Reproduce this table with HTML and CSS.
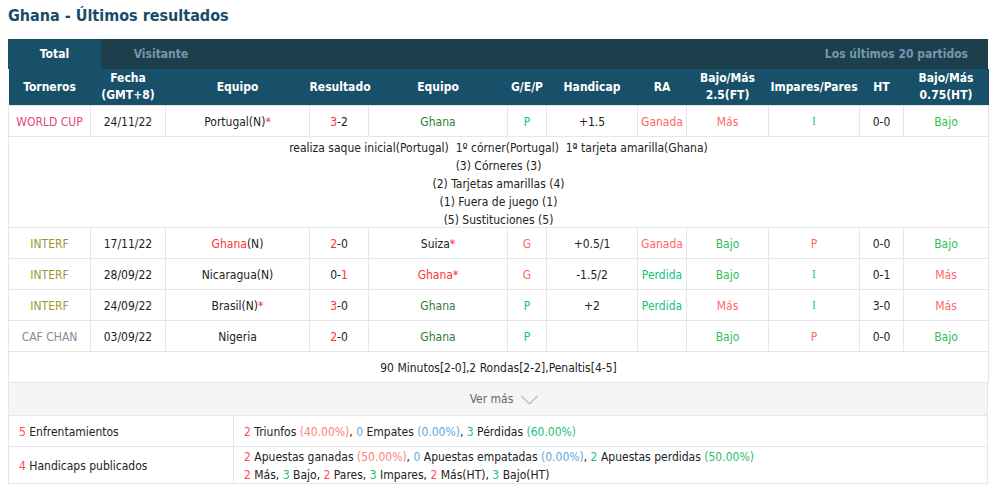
FILE: index.html
```html
<!DOCTYPE html>
<html lang="es">
<head>
<meta charset="utf-8">
<title>Ghana - Últimos resultados</title>
<link rel="stylesheet" href="styles.css">
</head>
<body>
<h2 class="title">Ghana - Últimos resultados</h2>
<div class="panel">
  <div class="tabs">
    <div class="tab active">Total</div>
    <div class="tab">Visitante</div>
    <div class="tabs-info">Los últimos 20 partidos</div>
  </div>
  <table class="results">
    <colgroup>
      <col class="w82"><col class="w75"><col class="w144"><col class="w59"><col class="w139"><col class="w39">
      <col class="w91"><col class="w49"><col class="w82"><col class="w91"><col class="w44"><col class="w85">
    </colgroup>
    <thead>
      <tr>
        <th>Torneros</th><th>Fecha<br>(GMT+8)</th><th>Equipo</th><th>Resultado</th><th>Equipo</th><th>G/E/P</th>
        <th>Handicap</th><th>RA</th><th>Bajo/Más<br>2.5(FT)</th><th>Impares/Pares</th><th>HT</th><th>Bajo/Más<br>0.75(HT)</th>
      </tr>
    </thead>
    <tbody>
      <tr>
        <td class="lg-wc">WORLD CUP</td><td>24/11/22</td><td>Portugal(N)<span class="red">*</span></td>
        <td><span class="red">3</span>-2</td><td class="dgreen">Ghana</td><td class="green">P</td>
        <td>+1.5</td><td class="red2">Ganada</td><td class="red2">Más</td><td class="green serif-i">I</td><td>0-0</td><td class="bgreen">Bajo</td>
      </tr>
      <tr class="detail">
        <td colspan="12"><div class="detail-text">realiza saque inicial(Portugal)&nbsp; 1º córner(Portugal)&nbsp; 1ª tarjeta amarilla(Ghana)<br>(3) Córneres (3)<br>(2) Tarjetas amarillas (4)<br>(1) Fuera de juego (1)<br>(5) Sustituciones (5)</div></td>
      </tr>
      <tr>
        <td class="lg-int">INTERF</td><td>17/11/22</td><td><span class="red">Ghana</span>(N)</td>
        <td><span class="red">2</span>-0</td><td>Suiza<span class="red">*</span></td><td class="red2">G</td>
        <td>+0.5/1</td><td class="red2">Ganada</td><td class="bgreen">Bajo</td><td class="red2">P</td><td>0-0</td><td class="bgreen">Bajo</td>
      </tr>
      <tr>
        <td class="lg-int">INTERF</td><td>28/09/22</td><td>Nicaragua(N)</td>
        <td>0-<span class="red">1</span></td><td class="red">Ghana*</td><td class="red2">G</td>
        <td>-1.5/2</td><td class="green">Perdida</td><td class="bgreen">Bajo</td><td class="green serif-i">I</td><td>0-1</td><td class="red2">Más</td>
      </tr>
      <tr>
        <td class="lg-int">INTERF</td><td>24/09/22</td><td>Brasil(N)<span class="red">*</span></td>
        <td><span class="red">3</span>-0</td><td class="dgreen">Ghana</td><td class="green">P</td>
        <td>+2</td><td class="green">Perdida</td><td class="red2">Más</td><td class="green serif-i">I</td><td>3-0</td><td class="red2">Más</td>
      </tr>
      <tr>
        <td class="lg-caf">CAF CHAN</td><td>03/09/22</td><td>Nigeria</td>
        <td><span class="red">2</span>-0</td><td class="dgreen">Ghana</td><td class="green">P</td>
        <td></td><td></td><td class="bgreen">Bajo</td><td class="red2">P</td><td>0-0</td><td class="bgreen">Bajo</td>
      </tr>
      <tr>
        <td colspan="12">90 Minutos[2-0],2 Rondas[2-2],Penaltis[4-5]</td>
      </tr>
    </tbody>
  </table>
  <div class="more">Ver más <svg class="chev" width="17" height="10" viewBox="0 0 17 10"><polyline points="0.5,0.8 8.5,8.8 16.5,0.8" fill="none" stroke="#b5b5b5" stroke-width="1.2"/></svg></div>
  <table class="summary">
    <tr>
      <td class="sum-l"><span class="n-red">5</span> Enfrentamientos</td>
      <td><span class="n-red">2</span> Triunfos <span class="p-red">(40.00%)</span>, <span class="n-blue">0</span> Empates <span class="n-blue">(0.00%)</span>, <span class="n-green">3</span> Pérdidas <span class="n-green">(60.00%)</span></td>
    </tr>
    <tr class="two">
      <td class="sum-l"><div class="nudge"><span class="n-red">4</span> Handicaps publicados</div></td>
      <td><div class="nudge"><span class="n-red">2</span> Apuestas ganadas <span class="p-red">(50.00%)</span>, <span class="n-blue">0</span> Apuestas empatadas <span class="n-blue">(0.00%)</span>, <span class="n-green">2</span> Apuestas perdidas <span class="n-green">(50.00%)</span><br><span class="n-red">2</span> Más, <span class="n-green">3</span> Bajo, <span class="n-red">2</span> Pares, <span class="n-green">3</span> Impares, <span class="n-red">2</span> Más(HT), <span class="n-green">3</span> Bajo(HT)</div></td>
    </tr>
  </table>
</div>
</body>
</html>
```

FILE: styles.css
```css
html, body {
  margin: 0;
  padding: 0;
  background: #fff;
}
body {
  padding: 0 8px;
  font-family: "DejaVu Sans Condensed", "Liberation Sans", sans-serif;
  font-stretch: condensed;
  font-size: 12px;
  color: #222;
}
.title {
  margin: 0 0 8px;
  font-size: 16px;
  line-height: 31px;
  font-weight: bold;
  color: #1c4a66;
}
.panel {
  width: 980px;
}
.tabs {
  display: flex;
  align-items: stretch;
  height: 30px;
  background: #1d3f4c;
  font-weight: bold;
  font-size: 12px;
}
.tab {
  display: flex;
  align-items: center;
  justify-content: center;
  width: 93px;
  color: #7199b2;
}
.tab + .tab {
  width: 120px;
}
.tab.active {
  background: #175068;
  color: #fff;
}
.tabs-info {
  margin-left: auto;
  display: flex;
  align-items: center;
  padding-right: 20px;
  color: #7199b2;
}
table {
  border-collapse: collapse;
  table-layout: fixed;
  width: 980px;
}
.results th {
  background: #175068;
  color: #fff;
  font-weight: bold;
  height: 36px;
  padding: 0;
  line-height: 17px;
  text-align: center;
}
.results td {
  height: 29px;
  padding: 1px 0 0;
  border: 1px solid #e6e6e6;
  text-align: center;
  line-height: 18px;
}
.results tr.detail td {
  height: 89px;
  padding: 0;
}
.detail-text {
  margin: 2px 0 -2px;
}
.serif-i {
  font-family: "DejaVu Serif", "Liberation Serif", serif;
  font-size: 11px;
}
.w82 { width: 82px; }
.w75 { width: 75px; }
.w144 { width: 144px; }
.w59 { width: 59px; }
.w139 { width: 139px; }
.w39 { width: 39px; }
.w91 { width: 91px; }
.w49 { width: 49px; }
.w44 { width: 44px; }
.w85 { width: 85px; }
.lg-wc { color: #e4477e; }
.lg-int { color: #999933; }
.lg-caf { color: #8a8a99; }
.red { color: #ff3333; }
.red2 { color: #ff6666; }
.dgreen { color: #2f7d32; }
.green { color: #14c27a; }
.bgreen { color: #2fbf55; }
.more {
  height: 32px;
  display: flex;
  align-items: center;
  justify-content: center;
  gap: 8px;
  padding-left: 12px;
  background: #f5f5f5;
  color: #666;
  border-left: 1px solid #e6e6e6;
  border-right: 1px solid #e6e6e6;
}
.chev {
  display: block;
  margin-top: 1px;
}
.summary td {
  border: 1px solid #e6e6e6;
  padding: 2px 10px 0;
  height: 28px;
  line-height: 19px;
  text-align: left;
}
.summary .sum-l {
  width: 204px;
}
.summary tr.two td {
  height: 36px;
  padding: 0 10px;
  line-height: 18px;
}
.nudge {
  margin: 1px 0 -1px;
}
.n-red { color: #ff4d4d; }
.p-red { color: #ff8080; }
.n-blue { color: #5aa9e6; }
.n-green { color: #1cbf72; }
```
